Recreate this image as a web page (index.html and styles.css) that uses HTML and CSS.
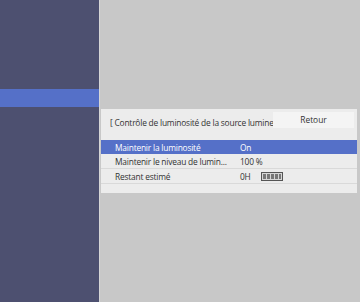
FILE: index.html
```html
<!DOCTYPE html>
<html lang="fr">
<head>
    <meta charset="UTF-8">
    <meta name="viewport" content="width=device-width, initial-scale=1.0">
    <title>Contrôle de luminosité</title>
    <link rel="stylesheet" href="styles.css">
</head>
<body>
    <div class="screen">
        <div class="sidebar">
            <div class="side-item"></div>
        </div>
        <div class="main">
            <div class="panel">
                <div class="panel-head">
                    <span class="panel-title">[ Contrôle de luminosité de la source lumineuse ]</span>
                    <button type="button" class="back-btn">Retour</button>
                </div>
                <div class="row selected">
                    <span class="label">Maintenir la luminosité</span>
                    <span class="value">On</span>
                </div>
                <div class="row">
                    <span class="label">Maintenir le niveau de lumin...</span>
                    <span class="value">100 %</span>
                </div>
                <div class="row">
                    <span class="label">Restant estimé</span>
                    <span class="value">0H
                        <svg class="gauge" width="22" height="9" viewBox="0 0 22 9">
                            <rect x="0.5" y="0.5" width="21" height="8" fill="#d6d6d6" stroke="#555"/>
                            <rect x="2" y="2" width="3" height="5" fill="#777"/>
                            <rect x="6" y="2" width="3" height="5" fill="#777"/>
                            <rect x="10" y="2" width="3" height="5" fill="#777"/>
                            <rect x="14" y="2" width="3" height="5" fill="#777"/>
                            <rect x="18" y="2" width="2" height="5" fill="#777"/>
                        </svg>
                    </span>
                </div>
                <div class="panel-foot"></div>
            </div>
        </div>
    </div>
</body>
</html>
```

FILE: styles.css
```css
body {
    margin: 0;
    font-family: 'Open Sans', 'Noto Sans', sans-serif;
    background-color: #c8c8c8;
}
.screen {
    display: flex;
    width: 360px;
    height: 302px;
    overflow: hidden;
}
.sidebar {
    width: 100px;
    height: 100%;
    background-color: #4d5070;
    border-right: 1px solid #d6d6d6;
    padding-top: 89px;
    box-sizing: border-box;
}
.side-item {
    height: 18px;
    background-color: #5570c8;
}
.main {
    flex: 1;
    padding-top: 109px;
    padding-left: 1px;
    padding-right: 3px;
}
.panel {
    background-color: #ececec;
    width: 256px;
}
.panel-head {
    display: flex;
    align-items: flex-start;
    height: 31px;
    padding-left: 9px;
    padding-right: 3px;
    box-sizing: border-box;
}
.panel-title {
    flex: 1;
    font-size: 8.4px;
    letter-spacing: -0.2px;
    line-height: 12px;
    color: #333;
    white-space: nowrap;
    overflow: hidden;
    margin-top: 8px;
}
.back-btn {
    width: 81px;
    height: 16px;
    margin-top: 3px;
    border: none;
    background-color: #f4f4f4;
    font-family: inherit;
    font-size: 8.4px;
    color: #333;
    padding: 0 0 2px 0;
}
.row {
    display: flex;
    align-items: center;
    height: 15px;
    padding-left: 14px;
    font-size: 8.4px;
    letter-spacing: -0.2px;
    color: #333;
    border-bottom: 1px solid #d9d9d9;
    box-sizing: border-box;
}
.row.selected {
    background-color: #5570c8;
    color: #fff;
    height: 14px;
    border-bottom: none;
}
.label {
    width: 125px;
    white-space: nowrap;
}
.value {
    display: flex;
    align-items: center;
    gap: 10px;
}
.gauge {
    display: block;
}
.panel-foot {
    height: 9px;
}
```
